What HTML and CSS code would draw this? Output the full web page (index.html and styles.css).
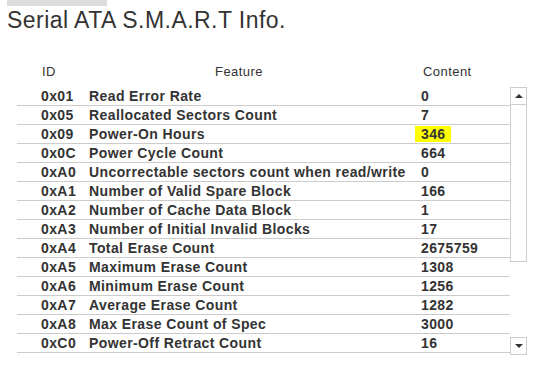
FILE: index.html
```html
<!DOCTYPE html>
<html>
<head>
<meta charset="utf-8">
<link rel="stylesheet" href="styles.css">
</head>
<body>
<div class="topbar"></div>
<h1 class="title">Serial ATA S.M.A.R.T Info.</h1>
<div class="head">
  <div class="h-id">ID</div>
  <div class="h-feat">Feature</div>
  <div class="h-cont">Content</div>
</div>
<div class="body">
  <div class="rows">
    <div class="row"><span>0x01</span><span>Read Error Rate</span><span>0</span></div>
    <div class="row"><span>0x05</span><span>Reallocated Sectors Count</span><span>7</span></div>
    <div class="row"><span>0x09</span><span>Power-On Hours</span><span><span class="hl">346</span></span></div>
    <div class="row"><span>0x0C</span><span>Power Cycle Count</span><span>664</span></div>
    <div class="row"><span>0xA0</span><span>Uncorrectable sectors count when read/write</span><span>0</span></div>
    <div class="row"><span>0xA1</span><span>Number of Valid Spare Block</span><span>166</span></div>
    <div class="row"><span>0xA2</span><span>Number of Cache Data Block</span><span>1</span></div>
    <div class="row"><span>0xA3</span><span>Number of Initial Invalid Blocks</span><span>17</span></div>
    <div class="row"><span>0xA4</span><span>Total Erase Count</span><span>2675759</span></div>
    <div class="row"><span>0xA5</span><span>Maximum Erase Count</span><span>1308</span></div>
    <div class="row"><span>0xA6</span><span>Minimum Erase Count</span><span>1256</span></div>
    <div class="row"><span>0xA7</span><span>Average Erase Count</span><span>1282</span></div>
    <div class="row"><span>0xA8</span><span>Max Erase Count of Spec</span><span>3000</span></div>
    <div class="row"><span>0xC0</span><span>Power-Off Retract Count</span><span>16</span></div>
  </div>
  <div class="scrollbar">
    <div class="sb-btn sb-up"><span class="tri-up"></span></div>
    <div class="sb-thumb"></div>
    <div class="sb-gap"></div>
    <div class="sb-btn sb-down"><span class="tri-down"></span></div>
  </div>
</div>
</body>
</html>
```

FILE: styles.css
```css
* { box-sizing: border-box; }
html, body { margin: 0; padding: 0; background: #fff; }
body {
  font-family: "Liberation Sans", Arial, sans-serif;
  color: #333;
  width: 539px;
  height: 368px;
  overflow: hidden;
}
.topbar {
  width: 100px;
  height: 6px;
  margin-left: 7px;
  background: #dddddd;
}
.title {
  margin: 1px 0 0 7px;
  font-size: 23px;
  line-height: 26px;
  letter-spacing: 0.45px;
  font-weight: normal;
  color: #333;
}
.head {
  margin-top: 29px;
  margin-left: 17px;
  display: grid;
  grid-template-columns: 72px 332px 1fr;
  font-size: 13px;
  line-height: 19px;
  letter-spacing: 0.45px;
  height: 19px;
}
.h-id { padding-left: 25px; }
.h-feat { padding-left: 126px; }
.h-cont { padding-left: 2px; }
.body {
  margin-top: 6px;
  margin-left: 17px;
  display: flex;
  align-items: flex-start;
}
.rows { width: 493px; }
.row {
  display: grid;
  grid-template-columns: 72px 332px 1fr;
  height: 19px;
  line-height: 18px;
  border-bottom: 1px solid #cccccc;
  font-size: 14px;
  letter-spacing: 0.4px;
  font-weight: bold;
  white-space: nowrap;
}
.row > span:first-child { padding-left: 24px; }
.hl {
  display: inline-block;
  background: #ffff00;
  line-height: 16px;
  padding: 0 5px 0 6px;
  margin-left: -6px;
}
.scrollbar {
  width: 17px;
  height: 268px;
  display: flex;
  flex-direction: column;
}
.sb-btn {
  height: 18px;
  border: 1px solid #cccccc;
  display: flex;
  align-items: center;
  justify-content: center;
}
.sb-thumb {
  height: 157px;
  border: 1px solid #cccccc;
  border-top: none;
}
.sb-gap { flex: 1; }
.tri-up {
  width: 0; height: 0;
  border-left: 4px solid transparent;
  border-right: 4px solid transparent;
  border-bottom: 4px solid #333;
}
.tri-down {
  width: 0; height: 0;
  border-left: 4px solid transparent;
  border-right: 4px solid transparent;
  border-top: 4px solid #333;
}
```
